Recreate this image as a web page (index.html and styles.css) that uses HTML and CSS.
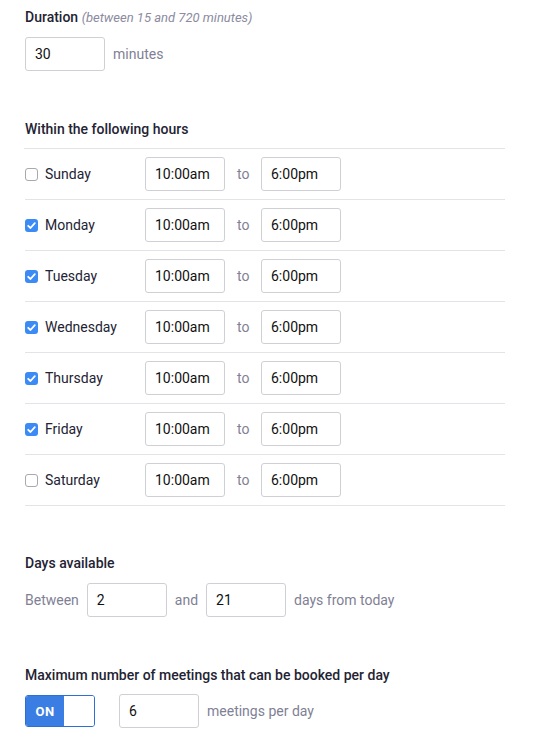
FILE: index.html
```html
<!DOCTYPE html>
<html>
<head>
<meta charset="utf-8">
<link rel="stylesheet" href="styles.css">
</head>
<body>
<div class="page">
  <section class="sec sec-duration">
    <div class="heading">Duration <span class="hint">(between 15 and 720 minutes)</span></div>
    <div class="inline-row">
      <div class="field">30</div>
      <span class="muted">minutes</span>
    </div>
  </section>

  <section class="sec sec-hours">
    <div class="heading">Within the following hours</div>
    <div class="hours">
      <div class="day-row">
        <label class="day"><span class="cb"></span>Sunday</label>
        <div class="field">10:00am</div><span class="muted to">to</span><div class="field">6:00pm</div>
      </div>
      <div class="day-row">
        <label class="day"><span class="cb checked"><svg viewBox="0 0 13 13" width="13" height="13"><path d="M3.2 6.8 L5.5 9 L9.8 4.2" fill="none" stroke="#fff" stroke-width="1.8" stroke-linecap="round" stroke-linejoin="round"/></svg></span>Monday</label>
        <div class="field">10:00am</div><span class="muted to">to</span><div class="field">6:00pm</div>
      </div>
      <div class="day-row">
        <label class="day"><span class="cb checked"><svg viewBox="0 0 13 13" width="13" height="13"><path d="M3.2 6.8 L5.5 9 L9.8 4.2" fill="none" stroke="#fff" stroke-width="1.8" stroke-linecap="round" stroke-linejoin="round"/></svg></span>Tuesday</label>
        <div class="field">10:00am</div><span class="muted to">to</span><div class="field">6:00pm</div>
      </div>
      <div class="day-row">
        <label class="day"><span class="cb checked"><svg viewBox="0 0 13 13" width="13" height="13"><path d="M3.2 6.8 L5.5 9 L9.8 4.2" fill="none" stroke="#fff" stroke-width="1.8" stroke-linecap="round" stroke-linejoin="round"/></svg></span>Wednesday</label>
        <div class="field">10:00am</div><span class="muted to">to</span><div class="field">6:00pm</div>
      </div>
      <div class="day-row">
        <label class="day"><span class="cb checked"><svg viewBox="0 0 13 13" width="13" height="13"><path d="M3.2 6.8 L5.5 9 L9.8 4.2" fill="none" stroke="#fff" stroke-width="1.8" stroke-linecap="round" stroke-linejoin="round"/></svg></span>Thursday</label>
        <div class="field">10:00am</div><span class="muted to">to</span><div class="field">6:00pm</div>
      </div>
      <div class="day-row">
        <label class="day"><span class="cb checked"><svg viewBox="0 0 13 13" width="13" height="13"><path d="M3.2 6.8 L5.5 9 L9.8 4.2" fill="none" stroke="#fff" stroke-width="1.8" stroke-linecap="round" stroke-linejoin="round"/></svg></span>Friday</label>
        <div class="field">10:00am</div><span class="muted to">to</span><div class="field">6:00pm</div>
      </div>
      <div class="day-row">
        <label class="day"><span class="cb"></span>Saturday</label>
        <div class="field">10:00am</div><span class="muted to">to</span><div class="field">6:00pm</div>
      </div>
    </div>
  </section>

  <section class="sec sec-days">
    <div class="heading">Days available</div>
    <div class="inline-row">
      <span class="muted">Between</span>
      <div class="field">2</div>
      <span class="muted">and</span>
      <div class="field">21</div>
      <span class="muted">days from today</span>
    </div>
  </section>

  <section class="sec sec-max">
    <div class="heading">Maximum number of meetings that can be booked per day</div>
    <div class="inline-row">
      <div class="toggle"><span class="toggle-on">ON</span><span class="toggle-knob"></span></div>
      <div class="field">6</div>
      <span class="muted">meetings per day</span>
    </div>
  </section>
</div>
</body>
</html>
```

FILE: styles.css
```css
* { box-sizing: border-box; }
html, body { margin: 0; padding: 0; background: #fff; }
body {
  font-family: Roboto, "Liberation Sans", Arial, sans-serif;
  font-size: 14px;
  color: #232333;
}
.page {
  width: 505px;
  padding-left: 25px;
}
.sec { display: flex; flex-direction: column; }
.heading {
  font-weight: 500;
  font-size: 14px;
  line-height: 20px;
  color: #232333;
}
.hint {
  font-style: italic;
  font-weight: 400;
  font-size: 13px;
  color: #8b8ba0;
}
.sec-duration { padding-top: 7px; }
.sec-duration .heading { margin-bottom: 9px; }
.sec-hours { margin-top: 48px; }
.sec-hours .heading { margin-bottom: 9px; }
.sec-days { margin-top: 47px; }
.sec-days .heading { margin-bottom: 10px; }
.sec-max { margin-top: 48px; }
.sec-max .heading { margin-bottom: 9px; }

.inline-row {
  display: flex;
  align-items: center;
  gap: 8px;
}

.field {
  width: 80px;
  height: 34px;
  border: 1px solid #cfcfd6;
  border-radius: 3px;
  padding: 0 9px;
  display: flex;
  align-items: center;
  font-size: 14px;
  color: #111;
  background: #fff;
  flex: none;
}
.muted { color: #7f7f95; font-size: 14px; }

.hours {
  border-top: 1px solid #e4e4e8;
  margin-left: -1px;
  padding-left: 1px;
}
.day-row {
  display: flex;
  align-items: center;
  height: 51px;
  border-bottom: 1px solid #e4e4e8;
}
.day {
  width: 120px;
  display: flex;
  align-items: center;
  gap: 7px;
  color: #232333;
}
.to { margin: 0 12px 0 12px; width: 12px; }
.cb {
  width: 13px;
  height: 13px;
  border: 1px solid #a8a8ae;
  border-radius: 3px;
  background: #fff;
  display: inline-block;
  flex: none;
}
.cb.checked {
  border: none;
  background: #3c8af5;
}
.cb svg { display: block; }

.toggle {
  width: 70px;
  height: 32px;
  border: 1px solid #2f6fd1;
  border-radius: 3px;
  display: flex;
  overflow: hidden;
  margin-right: 16px;
  flex: none;
}
.toggle-on {
  width: 38px;
  background: #3b7ee3;
  color: #fff;
  font-weight: 700;
  font-size: 13px;
  letter-spacing: 0.5px;
  display: flex;
  align-items: center;
  justify-content: center;
}
.toggle-knob {
  flex: 1;
  background: #fff;
}
```
